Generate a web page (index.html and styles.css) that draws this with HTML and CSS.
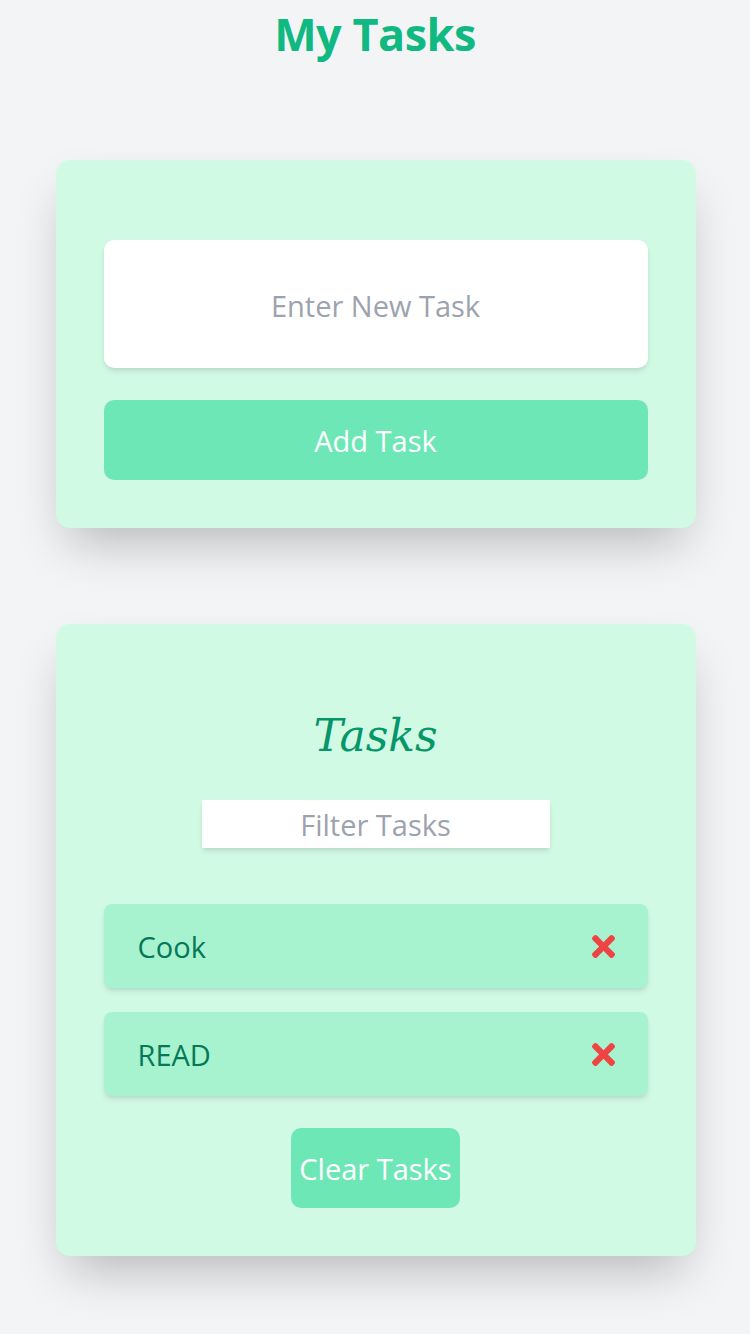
FILE: index.html
```html
<!DOCTYPE html>
<html lang="en">
<head>
<meta charset="utf-8">
<title>My Tasks</title>
<link rel="stylesheet" href="styles.css">
</head>
<body>
<h1 class="title">My Tasks</h1>
<main class="page">
  <section class="card card-add">
    <div class="new-task">Enter New Task</div>
    <button class="btn btn-wide">Add Task</button>
  </section>
  <section class="card card-list">
    <h2 class="list-title">Tasks</h2>
    <div class="filter">Filter Tasks</div>
    <ul class="tasks">
      <li class="task"><span>Cook</span>
        <svg class="del" viewBox="0 80 352 352" aria-hidden="true"><path d="M242.72 256l100.07-100.07c12.28-12.28 12.28-32.19 0-44.48l-22.24-22.24c-12.28-12.28-32.19-12.28-44.48 0L176 189.28 75.93 89.21c-12.28-12.28-32.19-12.28-44.48 0L9.21 111.45c-12.28 12.28-12.28 32.19 0 44.48L109.28 256 9.21 356.07c-12.28 12.28-12.28 32.19 0 44.48l22.24 22.24c12.28 12.28 32.2 12.28 44.48 0L176 322.72l100.07 100.07c12.28 12.28 32.2 12.28 44.48 0l22.24-22.24c12.28-12.28 12.28-32.19 0-44.48L242.72 256z"/></svg>
      </li>
      <li class="task"><span>READ</span>
        <svg class="del" viewBox="0 80 352 352" aria-hidden="true"><path d="M242.72 256l100.07-100.07c12.28-12.28 12.28-32.19 0-44.48l-22.24-22.24c-12.28-12.28-32.19-12.28-44.48 0L176 189.28 75.93 89.21c-12.28-12.28-32.19-12.28-44.48 0L9.21 111.45c-12.28 12.28-12.28 32.19 0 44.48L109.28 256 9.21 356.07c-12.28 12.28-12.28 32.19 0 44.48l22.24 22.24c12.28 12.28 32.2 12.28 44.48 0L176 322.72l100.07 100.07c12.28 12.28 32.2 12.28 44.48 0l22.24-22.24c12.28-12.28 12.28-32.19 0-44.48L242.72 256z"/></svg>
      </li>
    </ul>
    <button class="btn btn-clear">Clear Tasks</button>
  </section>
</main>
</body>
</html>
```
FILE: styles.css
```css
* { box-sizing: border-box; }
html, body { margin: 0; padding: 0; }
body {
  background: #f3f4f6;
  font-family: "Open Sans", "Noto Sans", sans-serif;
  height: 1334px;
  overflow: hidden;
}
.title {
  margin: 0;
  padding-top: 10px;
  font-size: 45px;
  line-height: 48px;
  font-weight: 700;
  color: #10b981;
  text-align: center;
  letter-spacing: -0.5px;
}
.page {
  display: flex;
  flex-direction: column;
  align-items: center;
  gap: 96px;
  padding-top: 102px;
  padding-left: 1px;
}
.card {
  width: 640px;
  background: #d1fae5;
  border-radius: 14px;
  box-shadow: 0 25px 50px -12px rgba(0,0,0,0.25);
  padding: 80px 48px 48px;
  display: flex;
  flex-direction: column;
  align-items: center;
}
.new-task {
  width: 100%;
  height: 128px;
  background: #fff;
  border-radius: 10px;
  box-shadow: 0 4px 6px -1px rgba(0,0,0,0.1), 0 2px 4px -1px rgba(0,0,0,0.06);
  display: flex;
  align-items: center;
  justify-content: center;
  font-size: 29px;
  color: #9ca3af;
  padding-top: 2px;
}
.btn {
  border: 0;
  background: #6ee7b7;
  color: #fff;
  font-family: inherit;
  font-size: 29px;
  border-radius: 10px;
  height: 80px;
  padding: 0 8px;
}
.btn-wide { width: 100%; margin-top: 32px; }
.list-title {
  margin: 0 0 32px;
  font-family: "DejaVu Serif", "Liberation Serif", serif;
  font-style: italic;
  font-weight: 400;
  font-size: 44px;
  line-height: 64px;
  color: #059669;
}
.filter {
  width: 348px;
  height: 48px;
  background: #fff;
  box-shadow: 0 4px 6px -1px rgba(0,0,0,0.1), 0 2px 4px -1px rgba(0,0,0,0.06);
  display: flex;
  align-items: center;
  justify-content: center;
  font-size: 29px;
  color: #9ca3af;
}
.tasks {
  list-style: none;
  margin: 56px 0 0;
  padding: 0;
  width: 100%;
  display: flex;
  flex-direction: column;
  gap: 24px;
}
.task {
  height: 84px;
  background: #a7f3d0;
  border-radius: 8px;
  box-shadow: 0 4px 6px -1px rgba(0,0,0,0.1), 0 2px 4px -1px rgba(0,0,0,0.06);
  display: flex;
  align-items: center;
  justify-content: space-between;
  padding: 0 33px 0 34px;
  font-size: 29px;
  color: #047857;
}
.del {
  width: 23px;
  height: 23px;
  fill: #ef4444;
}
.btn-clear { margin-top: 32px; }
```
